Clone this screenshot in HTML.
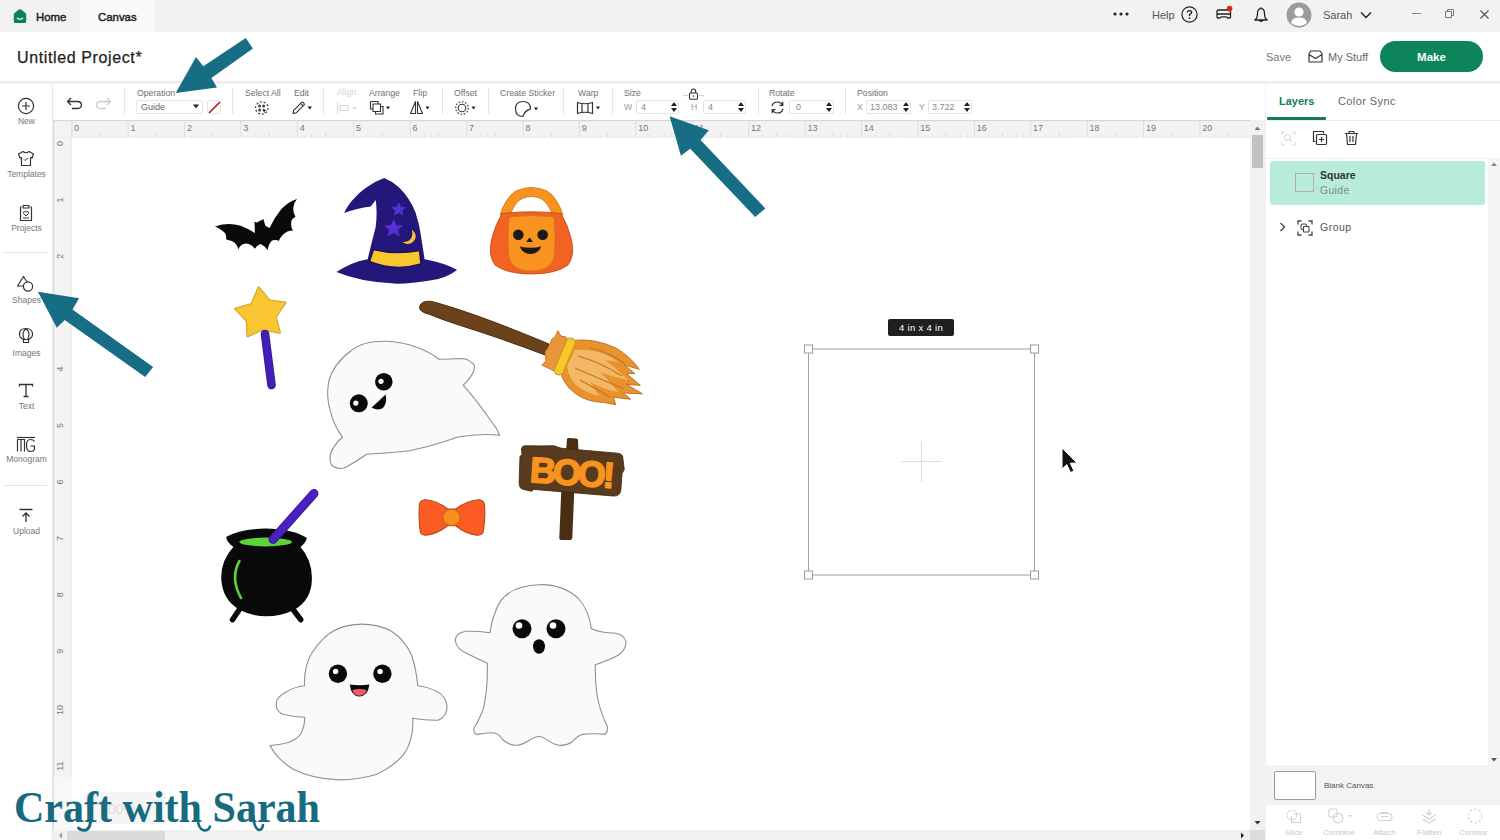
<!DOCTYPE html>
<html><head><meta charset="utf-8">
<style>
*{box-sizing:border-box;margin:0;padding:0}
html,body{width:1500px;height:840px;overflow:hidden;background:#fff;font-family:"Liberation Sans",sans-serif;color:#333}
.a{position:absolute;white-space:nowrap}
svg.a{overflow:visible}
#tabbar{left:0;top:0;width:1500px;height:32px;background:#f2f2f2}
#canvastab{left:80px;top:0;width:74px;height:32px;background:#fafafa}
#header{left:0;top:32px;width:1500px;height:50px;background:#fff}
#hdrline{left:0;top:81px;width:1500px;height:3px;background:linear-gradient(#e9e9e9,#f4f4f4)}
#sidebar{left:0;top:84px;width:53px;height:756px;background:#fff;border-right:1px solid #e8e8e8}
#toolbar{left:53px;top:84px;width:1212px;height:36px;background:#fff}
#panel{left:1265px;top:84px;width:235px;height:756px;background:#f3f3f3}
.t9{font-size:8.7px;line-height:9px;color:#707070}
.sep{position:absolute;top:88px;width:1px;height:26px;background:#e6e6e6}
.inp{position:absolute;top:100px;height:14px;border:1px solid #e4e4e4;border-radius:2px;background:#fff;font-size:9px;line-height:12px;color:#888;padding-left:4px}
.spin{position:absolute;top:1px;right:1px;width:7px;height:10px}
.sl{font-size:8.5px;line-height:9px;color:#777;text-align:center;width:53px;left:0}
.bl{font-size:8px;line-height:8px;color:#c8c8c8}
</style></head><body>
<div id="tabbar" class="a"></div>
<div id="canvastab" class="a"></div>
<svg class="a" style="left:13px;top:8px" width="14" height="16" viewBox="0 0 14 16"><path d="M0.8 6.5 Q0.8 5.6 1.6 5 L5.8 1.6 Q7 0.7 8.2 1.6 L12.4 5 Q13.2 5.6 13.2 6.5 V13.6 Q13.2 15 11.8 15 H2.2 Q0.8 15 0.8 13.6 Z" fill="#0f8056"/><path d="M4.3 10.2 Q7 12.4 9.7 10.2" stroke="#a8f0cc" stroke-width="1.5" fill="none" stroke-linecap="round"/></svg>
<div class="a" style="left:36px;top:12px;font-size:11.4px;line-height:11px;color:#222;-webkit-text-stroke:0.45px #222">Home</div>
<div class="a" style="left:98px;top:12px;font-size:11.4px;line-height:11px;color:#222;-webkit-text-stroke:0.45px #222">Canvas</div>
<!-- right top -->
<svg class="a" style="left:1113px;top:12px" width="16" height="4"><circle cx="2" cy="2" r="1.6" fill="#222"/><circle cx="8" cy="2" r="1.6" fill="#222"/><circle cx="14" cy="2" r="1.6" fill="#222"/></svg>
<div class="a" style="left:1152px;top:10px;font-size:11px;line-height:11px;color:#555">Help</div>
<svg class="a" style="left:1181px;top:6px" width="17" height="17" viewBox="0 0 17 17"><circle cx="8.5" cy="8.5" r="7.6" fill="none" stroke="#222" stroke-width="1.2"/><path d="M6.3 6.6 Q6.3 4.6 8.5 4.6 Q10.7 4.6 10.7 6.5 Q10.7 7.8 8.5 8.7 V10" fill="none" stroke="#222" stroke-width="1.3"/><circle cx="8.5" cy="12.2" r="0.9" fill="#222"/></svg>
<svg class="a" style="left:1216px;top:5px" width="18" height="16" viewBox="0 0 18 16"><path d="M2.5 5 H13 Q14.5 5 14.5 6.5 V12 Q14.5 13 13.5 13 H11.5 Q11 11.8 10 11.8 H5.5 Q4.5 11.8 4 13 H2 Q1 13 1 12 V6.5 Q1 5 2.5 5 Z M1 9 H14.5" fill="none" stroke="#222" stroke-width="1.3" stroke-linejoin="round"/><circle cx="13.6" cy="3.6" r="2.8" fill="#d42a10"/></svg>
<svg class="a" style="left:1253px;top:6px" width="16" height="17" viewBox="0 0 16 17"><path d="M8 1.2 V2.4 M3.6 12.2 Q4.5 10.5 4.5 7.5 Q4.5 2.6 8 2.6 Q11.5 2.6 11.5 7.5 Q11.5 10.5 12.4 12.2 L14.2 14 H1.8 Z M6.3 14.3 Q8 16.6 9.7 14.3" fill="none" stroke="#222" stroke-width="1.3" stroke-linejoin="round"/></svg>
<svg class="a" style="left:1286px;top:2px" width="26" height="26" viewBox="0 0 26 26"><circle cx="13" cy="13" r="12.5" fill="#9b9b9b"/><circle cx="13" cy="10" r="4.6" fill="#fff"/><path d="M5 21 Q6 15.6 13 15.6 Q20 15.6 21 21 Q17.5 24 13 24 Q8.5 24 5 21 Z" fill="#fff"/></svg>
<div class="a" style="left:1323px;top:10px;font-size:11px;line-height:11px;color:#555">Sarah</div>
<svg class="a" style="left:1360px;top:11px" width="12" height="8"><path d="M1 1.5 L6 6.5 L11 1.5" fill="none" stroke="#222" stroke-width="1.4"/></svg>
<div class="a" style="left:1412px;top:13px;width:9px;height:1px;background:#888"></div>
<svg class="a" style="left:1445px;top:9px" width="9" height="9"><path d="M0.5 2.5 H6.5 V8.5 H0.5 Z M2.5 2.5 V0.5 H8.5 V6.5 H6.5" fill="none" stroke="#777" stroke-width="1"/></svg>
<svg class="a" style="left:1480px;top:10px" width="9" height="9"><path d="M0.5 0.5 L8.5 8.5 M8.5 0.5 L0.5 8.5" stroke="#555" stroke-width="1.1"/></svg>
<!-- header -->
<div id="header" class="a"></div>
<div class="a" style="left:17px;top:50px;font-size:16px;line-height:16px;color:#222;letter-spacing:0.62px;-webkit-text-stroke:0.25px #222">Untitled Project*</div>
<div class="a" style="left:1266px;top:52px;font-size:11px;line-height:11px;color:#777">Save</div>
<svg class="a" style="left:1308px;top:50px" width="15" height="13" viewBox="0 0 15 13"><path d="M1 3.5 L2.8 1 H12.2 L14 3.5 V11.5 Q14 12 13.5 12 H1.5 Q1 12 1 11.5 Z M1 4.5 L7.5 8.5 L14 4.5" fill="none" stroke="#333" stroke-width="1.2" stroke-linejoin="round"/></svg>
<div class="a" style="left:1328px;top:52px;font-size:11px;line-height:11px;color:#666">My Stuff</div>
<div class="a" style="left:1380px;top:41px;width:103px;height:31px;border-radius:16px;background:#0d8459;color:#fff;font-size:11.5px;font-weight:bold;text-align:center;line-height:33px">Make</div>
<div id="hdrline" class="a"></div>
<div id="toolbar" class="a"></div>
<svg class="a" style="left:66px;top:97px" width="17" height="13" viewBox="0 0 17 13"><path d="M5 1 L1.5 4.5 L5 8 M1.5 4.5 H11 Q15.5 4.5 15.5 8 Q15.5 11.5 11 11.5 H6" fill="none" stroke="#333" stroke-width="1.3" stroke-linejoin="round"/></svg>
<svg class="a" style="left:95px;top:97px" width="17" height="13" viewBox="0 0 17 13"><path d="M12 1 L15.5 4.5 L12 8 M15.5 4.5 H6 Q1.5 4.5 1.5 8 Q1.5 11.5 6 11.5 H11" fill="none" stroke="#ccc" stroke-width="1.3" stroke-linejoin="round"/></svg>
<div class="sep" style="left:124px"></div>
<div class="a t9" style="left:137px;top:89px">Operation</div>
<div class="inp" style="left:136px;width:67px;color:#666">Guide</div>
<svg class="a" style="left:193px;top:104px" width="6" height="5"><path d="M0 0.5 H6 L3 4.5 Z" fill="#222"/></svg>
<div class="a" style="left:207px;top:100px;width:14px;height:14px;border:1px solid #e4e4e4;border-radius:2px;background:#fff"></div>
<svg class="a" style="left:207px;top:100px" width="14" height="14"><path d="M2 13 L13 2" stroke="#c8191f" stroke-width="1.7"/></svg>
<div class="sep" style="left:232px"></div>
<div class="a t9" style="left:245px;top:89px">Select All</div>
<svg class="a" style="left:254px;top:100px" width="16" height="16" viewBox="0 0 16 16"><circle cx="7.8" cy="8" r="6.2" fill="none" stroke="#333" stroke-width="1.2" stroke-dasharray="1.8 2"/><circle cx="5.6" cy="6" r="1.5" fill="#444"/><circle cx="9.6" cy="6" r="1.5" fill="#444"/><circle cx="5.6" cy="10" r="1.5" fill="#444"/><path d="M8.5 8.8 L12.6 10.2 L10.6 11.1 L10.4 13.5 Z" fill="#111"/></svg>
<div class="a t9" style="left:294px;top:89px">Edit</div>
<svg class="a" style="left:291px;top:100px" width="22" height="15" viewBox="0 0 22 15"><path d="M2 13.5 L2.6 10.4 L10.4 2.6 Q11.3 1.7 12.2 2.6 L12.9 3.3 Q13.8 4.2 12.9 5.1 L5.1 12.9 Z M9.6 3.4 L12.1 5.9" fill="none" stroke="#333" stroke-width="1.1" stroke-linejoin="round"/><path d="M16.5 6.5 H21 L18.75 9.5 Z" fill="#222"/></svg>
<div class="sep" style="left:323px"></div>
<div class="a t9" style="left:337px;top:88px;color:#d4d4d4">Align</div>
<svg class="a" style="left:336px;top:102px" width="22" height="12" viewBox="0 0 22 12"><path d="M1.5 1 V11 M4 3.5 H12 V8.5 H4 Z" fill="none" stroke="#d4d4d4" stroke-width="1.1"/><path d="M16.5 5 H20.5 L18.5 7.5 Z" fill="#d4d4d4"/></svg>
<div class="a t9" style="left:369px;top:89px">Arrange</div>
<svg class="a" style="left:369px;top:100px" width="22" height="16" viewBox="0 0 22 16"><path d="M1.5 1.5 H9 V4 M4 4 H11.5 V11.5 H4 Z M1.5 1.5 V9 H4 M6.5 11.5 V14 H14 V6.5 H11.5" fill="none" stroke="#333" stroke-width="1.1"/><path d="M17 6.5 H21 L19 9.5 Z" fill="#222"/></svg>
<div class="a t9" style="left:413px;top:89px">Flip</div>
<svg class="a" style="left:409px;top:100px" width="22" height="15" viewBox="0 0 22 15"><path d="M6.5 1.5 L1.5 13.5 H6.5 Z M8.5 1.5 L13.5 13.5 H8.5 Z" fill="none" stroke="#333" stroke-width="1.1" stroke-linejoin="round"/><path d="M16.5 6.5 H20.5 L18.5 9.5 Z" fill="#222"/></svg>
<div class="sep" style="left:442px"></div>
<div class="a t9" style="left:454px;top:89px">Offset</div>
<svg class="a" style="left:455px;top:100px" width="22" height="16" viewBox="0 0 22 16"><circle cx="7" cy="8" r="3.8" fill="none" stroke="#333" stroke-width="1.1"/><circle cx="7" cy="8" r="6.3" fill="none" stroke="#333" stroke-width="1.1" stroke-dasharray="1.6 1.6"/><path d="M16.5 6.5 H20.5 L18.5 9.5 Z" fill="#222"/></svg>
<div class="sep" style="left:488px"></div>
<div class="a t9" style="left:500px;top:89px">Create Sticker</div>
<svg class="a" style="left:514px;top:100px" width="26" height="18" viewBox="0 0 26 18"><path d="M9 16.5 Q1.5 16.5 1.5 9 Q1.5 1.5 9 1.5 Q16.5 1.5 16.5 9 Q11 9.5 9 16.5 Z M16.5 9 Q10.5 11 9 16.5" fill="none" stroke="#333" stroke-width="1.2" stroke-linejoin="round"/><path d="M20 7.5 H24 L22 10.5 Z" fill="#222"/></svg>
<div class="sep" style="left:563px"></div>
<div class="a t9" style="left:578px;top:89px">Warp</div>
<svg class="a" style="left:576px;top:101px" width="26" height="14" viewBox="0 0 26 14"><path d="M1.5 1.5 Q9 4 16.5 1.5 V12.5 Q9 10 1.5 12.5 Z M6 2.6 V11.4 M12 2.6 V11.4" fill="none" stroke="#333" stroke-width="1.2"/><path d="M20 5.5 H24 L22 8.5 Z" fill="#222"/></svg>
<div class="sep" style="left:612px"></div>
<div class="a t9" style="left:624px;top:89px">Size</div>
<div class="a t9" style="left:624px;top:103px;color:#999">W</div>
<div class="inp" style="left:636px;width:43px">4</div>
<svg class="a" style="left:670px;top:101px" width="8" height="12"><path d="M4 1 L7 5 H1 Z M4 11 L7 7 H1 Z" fill="#222"/></svg>
<svg class="a" style="left:683px;top:88px" width="21" height="12" viewBox="0 0 21 12"><path d="M0.5 8.5 V7.5 H5 M16 7.5 H20.5 V8.5" fill="none" stroke="#ccc" stroke-width="1"/><rect x="6.5" y="5" width="8" height="6.2" rx="1" fill="none" stroke="#333" stroke-width="1.1"/><path d="M8.3 5 V3.2 Q8.3 1 10.5 1 Q12.7 1 12.7 3.2 V5" fill="none" stroke="#333" stroke-width="1.1"/><circle cx="10.5" cy="8" r="0.8" fill="#333"/></svg>
<div class="a t9" style="left:691px;top:103px;color:#999">H</div>
<div class="inp" style="left:703px;width:43px">4</div>
<svg class="a" style="left:737px;top:101px" width="8" height="12"><path d="M4 1 L7 5 H1 Z M4 11 L7 7 H1 Z" fill="#222"/></svg>
<div class="sep" style="left:758px"></div>
<div class="a t9" style="left:769px;top:89px">Rotate</div>
<svg class="a" style="left:770px;top:100px" width="15" height="15" viewBox="0 0 15 15"><path d="M2 6 Q3 2 7.5 2 Q11 2 12.6 5 M13 9 Q12 13 7.5 13 Q4 13 2.4 10 M12.8 1.8 V5.3 H9.5 M2.2 13.2 V9.7 H5.5" fill="none" stroke="#333" stroke-width="1.2"/></svg>
<div class="inp" style="left:789px;width:45px;padding-left:6px">0</div>
<svg class="a" style="left:825px;top:101px" width="8" height="12"><path d="M4 1 L7 5 H1 Z M4 11 L7 7 H1 Z" fill="#222"/></svg>
<div class="sep" style="left:845px"></div>
<div class="a t9" style="left:857px;top:89px">Position</div>
<div class="a t9" style="left:857px;top:103px;color:#999">X</div>
<div class="inp" style="left:866px;width:45px;padding-left:3px">13.083</div>
<svg class="a" style="left:902px;top:101px" width="8" height="12"><path d="M4 1 L7 5 H1 Z M4 11 L7 7 H1 Z" fill="#222"/></svg>
<div class="a t9" style="left:919px;top:103px;color:#999">Y</div>
<div class="inp" style="left:928px;width:44px;padding-left:3px">3.722</div>
<svg class="a" style="left:963px;top:101px" width="8" height="12"><path d="M4 1 L7 5 H1 Z M4 11 L7 7 H1 Z" fill="#222"/></svg>
<div id="sidebar" class="a"></div>
<svg class="a" style="left:17px;top:97px" width="18" height="18" viewBox="0 0 18 18"><circle cx="9" cy="9" r="7.6" fill="none" stroke="#333" stroke-width="1.2"/><path d="M9 5 V13 M5 9 H13" stroke="#333" stroke-width="1.2"/></svg>
<div class="a sl" style="top:117px">New</div>
<svg class="a" style="left:17px;top:150px" width="18" height="17" viewBox="0 0 18 17"><path d="M6 1.5 L1.5 4 L3 8 L4.5 7.5 V15.5 H13.5 V7.5 L15 8 L16.5 4 L12 1.5 Q9 4 6 1.5 Z" fill="none" stroke="#333" stroke-width="1.2" stroke-linejoin="round"/><path d="M7 9.5 L8 10.5 L11 8" fill="none" stroke="#333" stroke-width="1"/></svg>
<div class="a sl" style="top:170px">Templates</div>
<svg class="a" style="left:18px;top:204px" width="16" height="18" viewBox="0 0 16 18"><path d="M3.5 3 H2.5 V16.5 H13.5 V3 H12.5 M5 1.5 H11 V4 H5 Z" fill="none" stroke="#333" stroke-width="1.2" stroke-linejoin="round"/><path d="M8 12 L5.5 9.5 Q4.8 8 6.2 7.5 Q7.3 7.3 8 8.3 Q8.7 7.3 9.8 7.5 Q11.2 8 10.5 9.5 Z" fill="none" stroke="#333" stroke-width="1"/><path d="M5 14 H11" stroke="#333" stroke-width="1"/></svg>
<div class="a sl" style="top:224px">Projects</div>
<div class="a" style="left:4px;top:252px;width:43px;height:1px;background:#e4e4e4"></div>
<svg class="a" style="left:16px;top:275px" width="19" height="18" viewBox="0 0 19 18"><path d="M7.5 1.5 L1.5 11 H13.5 Z" fill="none" stroke="#333" stroke-width="1.2" stroke-linejoin="round"/><circle cx="12" cy="11.5" r="4.6" fill="#fff" stroke="#333" stroke-width="1.2"/><path d="M9 9 L13.5 11" stroke="#fff" stroke-width="0"/></svg>
<div class="a sl" style="top:296px">Shapes</div>
<svg class="a" style="left:18px;top:327px" width="16" height="18" viewBox="0 0 16 18"><path d="M8 1.5 Q14.5 1.5 14.5 7.5 Q14.5 10.5 10.5 12.5 H5.5 Q1.5 10.5 1.5 7.5 Q1.5 1.5 8 1.5 Z M5.5 12.5 V15.5 H10.5 V12.5 M8 1.5 Q5 4 5 7.5 Q5 10.5 6.5 12.5 M8 1.5 Q11 4 11 7.5 Q11 10.5 9.5 12.5" fill="none" stroke="#333" stroke-width="1.2" stroke-linejoin="round"/></svg>
<div class="a sl" style="top:349px">Images</div>
<svg class="a" style="left:18px;top:383px" width="16" height="15" viewBox="0 0 16 15"><path d="M1.5 3.5 V1.5 H14.5 V3.5 M8 1.5 V13.5 M5.5 13.5 H10.5" fill="none" stroke="#333" stroke-width="1.3"/></svg>
<div class="a sl" style="top:402px">Text</div>
<svg class="a" style="left:16px;top:436px" width="20" height="17" viewBox="0 0 20 17"><path d="M1 1.5 H19" stroke="#333" stroke-width="1.2"/><path d="M1.5 15.5 V4 Q1.5 3.5 2 3.5 H8.5 V15.5 M5 3.5 V15.5" fill="none" stroke="#333" stroke-width="1.2"/><path d="M18.5 5.5 Q17.5 3.5 14.5 3.5 Q10.5 3.5 10.5 9.5 Q10.5 15.5 14.5 15.5 Q18.5 15.5 18.5 12 V10 H14.5" fill="none" stroke="#333" stroke-width="1.2"/></svg>
<div class="a sl" style="top:455px">Monogram</div>
<div class="a" style="left:4px;top:485px;width:43px;height:1px;background:#e4e4e4"></div>
<svg class="a" style="left:18px;top:508px" width="16" height="15" viewBox="0 0 16 15"><path d="M1.5 1.5 H14.5 M8 14 V5 M4.5 8.5 L8 5 L11.5 8.5" fill="none" stroke="#333" stroke-width="1.3"/></svg>
<div class="a sl" style="top:527px">Upload</div>
<svg class="a" style="left:0;top:0" width="1500" height="840">
<rect x="53" y="120" width="1197" height="18" fill="#f3f3f3"/>
<rect x="53" y="120" width="1197" height="1.2" fill="#d6d6d6"/>
<rect x="71.3" y="121" width="1" height="17" fill="#dedede"/>
<rect x="78.4" y="135.5" width="1" height="2.5" fill="#dcdcdc"/>
<rect x="85.4" y="134.5" width="1" height="3.5" fill="#dcdcdc"/>
<rect x="92.5" y="135.5" width="1" height="2.5" fill="#dcdcdc"/>
<rect x="99.5" y="133" width="1" height="5" fill="#dcdcdc"/>
<rect x="106.6" y="135.5" width="1" height="2.5" fill="#dcdcdc"/>
<rect x="113.6" y="134.5" width="1" height="3.5" fill="#dcdcdc"/>
<rect x="120.7" y="135.5" width="1" height="2.5" fill="#dcdcdc"/>
<rect x="127.7" y="121" width="1" height="17" fill="#dedede"/>
<rect x="134.8" y="135.5" width="1" height="2.5" fill="#dcdcdc"/>
<rect x="141.8" y="134.5" width="1" height="3.5" fill="#dcdcdc"/>
<rect x="148.9" y="135.5" width="1" height="2.5" fill="#dcdcdc"/>
<rect x="155.9" y="133" width="1" height="5" fill="#dcdcdc"/>
<rect x="163.0" y="135.5" width="1" height="2.5" fill="#dcdcdc"/>
<rect x="170.0" y="134.5" width="1" height="3.5" fill="#dcdcdc"/>
<rect x="177.1" y="135.5" width="1" height="2.5" fill="#dcdcdc"/>
<rect x="184.1" y="121" width="1" height="17" fill="#dedede"/>
<rect x="191.2" y="135.5" width="1" height="2.5" fill="#dcdcdc"/>
<rect x="198.2" y="134.5" width="1" height="3.5" fill="#dcdcdc"/>
<rect x="205.3" y="135.5" width="1" height="2.5" fill="#dcdcdc"/>
<rect x="212.3" y="133" width="1" height="5" fill="#dcdcdc"/>
<rect x="219.4" y="135.5" width="1" height="2.5" fill="#dcdcdc"/>
<rect x="226.4" y="134.5" width="1" height="3.5" fill="#dcdcdc"/>
<rect x="233.5" y="135.5" width="1" height="2.5" fill="#dcdcdc"/>
<rect x="240.5" y="121" width="1" height="17" fill="#dedede"/>
<rect x="247.6" y="135.5" width="1" height="2.5" fill="#dcdcdc"/>
<rect x="254.6" y="134.5" width="1" height="3.5" fill="#dcdcdc"/>
<rect x="261.7" y="135.5" width="1" height="2.5" fill="#dcdcdc"/>
<rect x="268.7" y="133" width="1" height="5" fill="#dcdcdc"/>
<rect x="275.8" y="135.5" width="1" height="2.5" fill="#dcdcdc"/>
<rect x="282.8" y="134.5" width="1" height="3.5" fill="#dcdcdc"/>
<rect x="289.9" y="135.5" width="1" height="2.5" fill="#dcdcdc"/>
<rect x="296.9" y="121" width="1" height="17" fill="#dedede"/>
<rect x="304.0" y="135.5" width="1" height="2.5" fill="#dcdcdc"/>
<rect x="311.0" y="134.5" width="1" height="3.5" fill="#dcdcdc"/>
<rect x="318.1" y="135.5" width="1" height="2.5" fill="#dcdcdc"/>
<rect x="325.1" y="133" width="1" height="5" fill="#dcdcdc"/>
<rect x="332.2" y="135.5" width="1" height="2.5" fill="#dcdcdc"/>
<rect x="339.2" y="134.5" width="1" height="3.5" fill="#dcdcdc"/>
<rect x="346.3" y="135.5" width="1" height="2.5" fill="#dcdcdc"/>
<rect x="353.3" y="121" width="1" height="17" fill="#dedede"/>
<rect x="360.4" y="135.5" width="1" height="2.5" fill="#dcdcdc"/>
<rect x="367.5" y="134.5" width="1" height="3.5" fill="#dcdcdc"/>
<rect x="374.5" y="135.5" width="1" height="2.5" fill="#dcdcdc"/>
<rect x="381.6" y="133" width="1" height="5" fill="#dcdcdc"/>
<rect x="388.6" y="135.5" width="1" height="2.5" fill="#dcdcdc"/>
<rect x="395.7" y="134.5" width="1" height="3.5" fill="#dcdcdc"/>
<rect x="402.7" y="135.5" width="1" height="2.5" fill="#dcdcdc"/>
<rect x="409.8" y="121" width="1" height="17" fill="#dedede"/>
<rect x="416.8" y="135.5" width="1" height="2.5" fill="#dcdcdc"/>
<rect x="423.9" y="134.5" width="1" height="3.5" fill="#dcdcdc"/>
<rect x="430.9" y="135.5" width="1" height="2.5" fill="#dcdcdc"/>
<rect x="438.0" y="133" width="1" height="5" fill="#dcdcdc"/>
<rect x="445.0" y="135.5" width="1" height="2.5" fill="#dcdcdc"/>
<rect x="452.1" y="134.5" width="1" height="3.5" fill="#dcdcdc"/>
<rect x="459.1" y="135.5" width="1" height="2.5" fill="#dcdcdc"/>
<rect x="466.2" y="121" width="1" height="17" fill="#dedede"/>
<rect x="473.2" y="135.5" width="1" height="2.5" fill="#dcdcdc"/>
<rect x="480.3" y="134.5" width="1" height="3.5" fill="#dcdcdc"/>
<rect x="487.3" y="135.5" width="1" height="2.5" fill="#dcdcdc"/>
<rect x="494.4" y="133" width="1" height="5" fill="#dcdcdc"/>
<rect x="501.4" y="135.5" width="1" height="2.5" fill="#dcdcdc"/>
<rect x="508.5" y="134.5" width="1" height="3.5" fill="#dcdcdc"/>
<rect x="515.5" y="135.5" width="1" height="2.5" fill="#dcdcdc"/>
<rect x="522.6" y="121" width="1" height="17" fill="#dedede"/>
<rect x="529.6" y="135.5" width="1" height="2.5" fill="#dcdcdc"/>
<rect x="536.7" y="134.5" width="1" height="3.5" fill="#dcdcdc"/>
<rect x="543.7" y="135.5" width="1" height="2.5" fill="#dcdcdc"/>
<rect x="550.8" y="133" width="1" height="5" fill="#dcdcdc"/>
<rect x="557.8" y="135.5" width="1" height="2.5" fill="#dcdcdc"/>
<rect x="564.9" y="134.5" width="1" height="3.5" fill="#dcdcdc"/>
<rect x="571.9" y="135.5" width="1" height="2.5" fill="#dcdcdc"/>
<rect x="579.0" y="121" width="1" height="17" fill="#dedede"/>
<rect x="586.0" y="135.5" width="1" height="2.5" fill="#dcdcdc"/>
<rect x="593.1" y="134.5" width="1" height="3.5" fill="#dcdcdc"/>
<rect x="600.1" y="135.5" width="1" height="2.5" fill="#dcdcdc"/>
<rect x="607.2" y="133" width="1" height="5" fill="#dcdcdc"/>
<rect x="614.2" y="135.5" width="1" height="2.5" fill="#dcdcdc"/>
<rect x="621.3" y="134.5" width="1" height="3.5" fill="#dcdcdc"/>
<rect x="628.3" y="135.5" width="1" height="2.5" fill="#dcdcdc"/>
<rect x="635.4" y="121" width="1" height="17" fill="#dedede"/>
<rect x="642.5" y="135.5" width="1" height="2.5" fill="#dcdcdc"/>
<rect x="649.5" y="134.5" width="1" height="3.5" fill="#dcdcdc"/>
<rect x="656.6" y="135.5" width="1" height="2.5" fill="#dcdcdc"/>
<rect x="663.6" y="133" width="1" height="5" fill="#dcdcdc"/>
<rect x="670.7" y="135.5" width="1" height="2.5" fill="#dcdcdc"/>
<rect x="677.7" y="134.5" width="1" height="3.5" fill="#dcdcdc"/>
<rect x="684.8" y="135.5" width="1" height="2.5" fill="#dcdcdc"/>
<rect x="691.8" y="121" width="1" height="17" fill="#dedede"/>
<rect x="698.9" y="135.5" width="1" height="2.5" fill="#dcdcdc"/>
<rect x="705.9" y="134.5" width="1" height="3.5" fill="#dcdcdc"/>
<rect x="713.0" y="135.5" width="1" height="2.5" fill="#dcdcdc"/>
<rect x="720.0" y="133" width="1" height="5" fill="#dcdcdc"/>
<rect x="727.1" y="135.5" width="1" height="2.5" fill="#dcdcdc"/>
<rect x="734.1" y="134.5" width="1" height="3.5" fill="#dcdcdc"/>
<rect x="741.2" y="135.5" width="1" height="2.5" fill="#dcdcdc"/>
<rect x="748.2" y="121" width="1" height="17" fill="#dedede"/>
<rect x="755.3" y="135.5" width="1" height="2.5" fill="#dcdcdc"/>
<rect x="762.3" y="134.5" width="1" height="3.5" fill="#dcdcdc"/>
<rect x="769.4" y="135.5" width="1" height="2.5" fill="#dcdcdc"/>
<rect x="776.4" y="133" width="1" height="5" fill="#dcdcdc"/>
<rect x="783.5" y="135.5" width="1" height="2.5" fill="#dcdcdc"/>
<rect x="790.5" y="134.5" width="1" height="3.5" fill="#dcdcdc"/>
<rect x="797.6" y="135.5" width="1" height="2.5" fill="#dcdcdc"/>
<rect x="804.6" y="121" width="1" height="17" fill="#dedede"/>
<rect x="811.7" y="135.5" width="1" height="2.5" fill="#dcdcdc"/>
<rect x="818.7" y="134.5" width="1" height="3.5" fill="#dcdcdc"/>
<rect x="825.8" y="135.5" width="1" height="2.5" fill="#dcdcdc"/>
<rect x="832.8" y="133" width="1" height="5" fill="#dcdcdc"/>
<rect x="839.9" y="135.5" width="1" height="2.5" fill="#dcdcdc"/>
<rect x="846.9" y="134.5" width="1" height="3.5" fill="#dcdcdc"/>
<rect x="854.0" y="135.5" width="1" height="2.5" fill="#dcdcdc"/>
<rect x="861.0" y="121" width="1" height="17" fill="#dedede"/>
<rect x="868.1" y="135.5" width="1" height="2.5" fill="#dcdcdc"/>
<rect x="875.1" y="134.5" width="1" height="3.5" fill="#dcdcdc"/>
<rect x="882.2" y="135.5" width="1" height="2.5" fill="#dcdcdc"/>
<rect x="889.2" y="133" width="1" height="5" fill="#dcdcdc"/>
<rect x="896.3" y="135.5" width="1" height="2.5" fill="#dcdcdc"/>
<rect x="903.3" y="134.5" width="1" height="3.5" fill="#dcdcdc"/>
<rect x="910.4" y="135.5" width="1" height="2.5" fill="#dcdcdc"/>
<rect x="917.4" y="121" width="1" height="17" fill="#dedede"/>
<rect x="924.5" y="135.5" width="1" height="2.5" fill="#dcdcdc"/>
<rect x="931.6" y="134.5" width="1" height="3.5" fill="#dcdcdc"/>
<rect x="938.6" y="135.5" width="1" height="2.5" fill="#dcdcdc"/>
<rect x="945.7" y="133" width="1" height="5" fill="#dcdcdc"/>
<rect x="952.7" y="135.5" width="1" height="2.5" fill="#dcdcdc"/>
<rect x="959.8" y="134.5" width="1" height="3.5" fill="#dcdcdc"/>
<rect x="966.8" y="135.5" width="1" height="2.5" fill="#dcdcdc"/>
<rect x="973.9" y="121" width="1" height="17" fill="#dedede"/>
<rect x="980.9" y="135.5" width="1" height="2.5" fill="#dcdcdc"/>
<rect x="988.0" y="134.5" width="1" height="3.5" fill="#dcdcdc"/>
<rect x="995.0" y="135.5" width="1" height="2.5" fill="#dcdcdc"/>
<rect x="1002.1" y="133" width="1" height="5" fill="#dcdcdc"/>
<rect x="1009.1" y="135.5" width="1" height="2.5" fill="#dcdcdc"/>
<rect x="1016.2" y="134.5" width="1" height="3.5" fill="#dcdcdc"/>
<rect x="1023.2" y="135.5" width="1" height="2.5" fill="#dcdcdc"/>
<rect x="1030.3" y="121" width="1" height="17" fill="#dedede"/>
<rect x="1037.3" y="135.5" width="1" height="2.5" fill="#dcdcdc"/>
<rect x="1044.4" y="134.5" width="1" height="3.5" fill="#dcdcdc"/>
<rect x="1051.4" y="135.5" width="1" height="2.5" fill="#dcdcdc"/>
<rect x="1058.5" y="133" width="1" height="5" fill="#dcdcdc"/>
<rect x="1065.5" y="135.5" width="1" height="2.5" fill="#dcdcdc"/>
<rect x="1072.6" y="134.5" width="1" height="3.5" fill="#dcdcdc"/>
<rect x="1079.6" y="135.5" width="1" height="2.5" fill="#dcdcdc"/>
<rect x="1086.7" y="121" width="1" height="17" fill="#dedede"/>
<rect x="1093.7" y="135.5" width="1" height="2.5" fill="#dcdcdc"/>
<rect x="1100.8" y="134.5" width="1" height="3.5" fill="#dcdcdc"/>
<rect x="1107.8" y="135.5" width="1" height="2.5" fill="#dcdcdc"/>
<rect x="1114.9" y="133" width="1" height="5" fill="#dcdcdc"/>
<rect x="1121.9" y="135.5" width="1" height="2.5" fill="#dcdcdc"/>
<rect x="1129.0" y="134.5" width="1" height="3.5" fill="#dcdcdc"/>
<rect x="1136.0" y="135.5" width="1" height="2.5" fill="#dcdcdc"/>
<rect x="1143.1" y="121" width="1" height="17" fill="#dedede"/>
<rect x="1150.1" y="135.5" width="1" height="2.5" fill="#dcdcdc"/>
<rect x="1157.2" y="134.5" width="1" height="3.5" fill="#dcdcdc"/>
<rect x="1164.2" y="135.5" width="1" height="2.5" fill="#dcdcdc"/>
<rect x="1171.3" y="133" width="1" height="5" fill="#dcdcdc"/>
<rect x="1178.3" y="135.5" width="1" height="2.5" fill="#dcdcdc"/>
<rect x="1185.4" y="134.5" width="1" height="3.5" fill="#dcdcdc"/>
<rect x="1192.4" y="135.5" width="1" height="2.5" fill="#dcdcdc"/>
<rect x="1199.5" y="121" width="1" height="17" fill="#dedede"/>
<rect x="1206.6" y="135.5" width="1" height="2.5" fill="#dcdcdc"/>
<rect x="1213.6" y="134.5" width="1" height="3.5" fill="#dcdcdc"/>
<rect x="1220.7" y="135.5" width="1" height="2.5" fill="#dcdcdc"/>
<rect x="1227.7" y="133" width="1" height="5" fill="#dcdcdc"/>
<rect x="1234.8" y="135.5" width="1" height="2.5" fill="#dcdcdc"/>
<rect x="1241.8" y="134.5" width="1" height="3.5" fill="#dcdcdc"/>
<rect x="54" y="138.0" width="18" height="1" fill="#dedede"/>
<rect x="69.5" y="145.1" width="2.5" height="1" fill="#dcdcdc"/>
<rect x="68.5" y="152.1" width="3.5" height="1" fill="#dcdcdc"/>
<rect x="69.5" y="159.2" width="2.5" height="1" fill="#dcdcdc"/>
<rect x="67" y="166.2" width="5" height="1" fill="#dcdcdc"/>
<rect x="69.5" y="173.3" width="2.5" height="1" fill="#dcdcdc"/>
<rect x="68.5" y="180.3" width="3.5" height="1" fill="#dcdcdc"/>
<rect x="69.5" y="187.4" width="2.5" height="1" fill="#dcdcdc"/>
<rect x="54" y="194.4" width="18" height="1" fill="#dedede"/>
<rect x="69.5" y="201.5" width="2.5" height="1" fill="#dcdcdc"/>
<rect x="68.5" y="208.5" width="3.5" height="1" fill="#dcdcdc"/>
<rect x="69.5" y="215.6" width="2.5" height="1" fill="#dcdcdc"/>
<rect x="67" y="222.6" width="5" height="1" fill="#dcdcdc"/>
<rect x="69.5" y="229.7" width="2.5" height="1" fill="#dcdcdc"/>
<rect x="68.5" y="236.7" width="3.5" height="1" fill="#dcdcdc"/>
<rect x="69.5" y="243.8" width="2.5" height="1" fill="#dcdcdc"/>
<rect x="54" y="250.8" width="18" height="1" fill="#dedede"/>
<rect x="69.5" y="257.9" width="2.5" height="1" fill="#dcdcdc"/>
<rect x="68.5" y="264.9" width="3.5" height="1" fill="#dcdcdc"/>
<rect x="69.5" y="272.0" width="2.5" height="1" fill="#dcdcdc"/>
<rect x="67" y="279.0" width="5" height="1" fill="#dcdcdc"/>
<rect x="69.5" y="286.1" width="2.5" height="1" fill="#dcdcdc"/>
<rect x="68.5" y="293.1" width="3.5" height="1" fill="#dcdcdc"/>
<rect x="69.5" y="300.2" width="2.5" height="1" fill="#dcdcdc"/>
<rect x="54" y="307.2" width="18" height="1" fill="#dedede"/>
<rect x="69.5" y="314.3" width="2.5" height="1" fill="#dcdcdc"/>
<rect x="68.5" y="321.3" width="3.5" height="1" fill="#dcdcdc"/>
<rect x="69.5" y="328.4" width="2.5" height="1" fill="#dcdcdc"/>
<rect x="67" y="335.4" width="5" height="1" fill="#dcdcdc"/>
<rect x="69.5" y="342.5" width="2.5" height="1" fill="#dcdcdc"/>
<rect x="68.5" y="349.5" width="3.5" height="1" fill="#dcdcdc"/>
<rect x="69.5" y="356.6" width="2.5" height="1" fill="#dcdcdc"/>
<rect x="54" y="363.6" width="18" height="1" fill="#dedede"/>
<rect x="69.5" y="370.7" width="2.5" height="1" fill="#dcdcdc"/>
<rect x="68.5" y="377.7" width="3.5" height="1" fill="#dcdcdc"/>
<rect x="69.5" y="384.8" width="2.5" height="1" fill="#dcdcdc"/>
<rect x="67" y="391.8" width="5" height="1" fill="#dcdcdc"/>
<rect x="69.5" y="398.9" width="2.5" height="1" fill="#dcdcdc"/>
<rect x="68.5" y="405.9" width="3.5" height="1" fill="#dcdcdc"/>
<rect x="69.5" y="413.0" width="2.5" height="1" fill="#dcdcdc"/>
<rect x="54" y="420.0" width="18" height="1" fill="#dedede"/>
<rect x="69.5" y="427.1" width="2.5" height="1" fill="#dcdcdc"/>
<rect x="68.5" y="434.2" width="3.5" height="1" fill="#dcdcdc"/>
<rect x="69.5" y="441.2" width="2.5" height="1" fill="#dcdcdc"/>
<rect x="67" y="448.3" width="5" height="1" fill="#dcdcdc"/>
<rect x="69.5" y="455.3" width="2.5" height="1" fill="#dcdcdc"/>
<rect x="68.5" y="462.4" width="3.5" height="1" fill="#dcdcdc"/>
<rect x="69.5" y="469.4" width="2.5" height="1" fill="#dcdcdc"/>
<rect x="54" y="476.5" width="18" height="1" fill="#dedede"/>
<rect x="69.5" y="483.5" width="2.5" height="1" fill="#dcdcdc"/>
<rect x="68.5" y="490.6" width="3.5" height="1" fill="#dcdcdc"/>
<rect x="69.5" y="497.6" width="2.5" height="1" fill="#dcdcdc"/>
<rect x="67" y="504.7" width="5" height="1" fill="#dcdcdc"/>
<rect x="69.5" y="511.7" width="2.5" height="1" fill="#dcdcdc"/>
<rect x="68.5" y="518.8" width="3.5" height="1" fill="#dcdcdc"/>
<rect x="69.5" y="525.8" width="2.5" height="1" fill="#dcdcdc"/>
<rect x="54" y="532.9" width="18" height="1" fill="#dedede"/>
<rect x="69.5" y="539.9" width="2.5" height="1" fill="#dcdcdc"/>
<rect x="68.5" y="547.0" width="3.5" height="1" fill="#dcdcdc"/>
<rect x="69.5" y="554.0" width="2.5" height="1" fill="#dcdcdc"/>
<rect x="67" y="561.1" width="5" height="1" fill="#dcdcdc"/>
<rect x="69.5" y="568.1" width="2.5" height="1" fill="#dcdcdc"/>
<rect x="68.5" y="575.2" width="3.5" height="1" fill="#dcdcdc"/>
<rect x="69.5" y="582.2" width="2.5" height="1" fill="#dcdcdc"/>
<rect x="54" y="589.3" width="18" height="1" fill="#dedede"/>
<rect x="69.5" y="596.3" width="2.5" height="1" fill="#dcdcdc"/>
<rect x="68.5" y="603.4" width="3.5" height="1" fill="#dcdcdc"/>
<rect x="69.5" y="610.4" width="2.5" height="1" fill="#dcdcdc"/>
<rect x="67" y="617.5" width="5" height="1" fill="#dcdcdc"/>
<rect x="69.5" y="624.5" width="2.5" height="1" fill="#dcdcdc"/>
<rect x="68.5" y="631.6" width="3.5" height="1" fill="#dcdcdc"/>
<rect x="69.5" y="638.6" width="2.5" height="1" fill="#dcdcdc"/>
<rect x="54" y="645.7" width="18" height="1" fill="#dedede"/>
<rect x="69.5" y="652.7" width="2.5" height="1" fill="#dcdcdc"/>
<rect x="68.5" y="659.8" width="3.5" height="1" fill="#dcdcdc"/>
<rect x="69.5" y="666.8" width="2.5" height="1" fill="#dcdcdc"/>
<rect x="67" y="673.9" width="5" height="1" fill="#dcdcdc"/>
<rect x="69.5" y="680.9" width="2.5" height="1" fill="#dcdcdc"/>
<rect x="68.5" y="688.0" width="3.5" height="1" fill="#dcdcdc"/>
<rect x="69.5" y="695.0" width="2.5" height="1" fill="#dcdcdc"/>
<rect x="54" y="702.1" width="18" height="1" fill="#dedede"/>
<rect x="69.5" y="709.2" width="2.5" height="1" fill="#dcdcdc"/>
<rect x="68.5" y="716.2" width="3.5" height="1" fill="#dcdcdc"/>
<rect x="69.5" y="723.3" width="2.5" height="1" fill="#dcdcdc"/>
<rect x="67" y="730.3" width="5" height="1" fill="#dcdcdc"/>
<rect x="69.5" y="737.4" width="2.5" height="1" fill="#dcdcdc"/>
<rect x="68.5" y="744.4" width="3.5" height="1" fill="#dcdcdc"/>
<rect x="69.5" y="751.5" width="2.5" height="1" fill="#dcdcdc"/>
<rect x="54" y="758.5" width="18" height="1" fill="#dedede"/>
<rect x="69.5" y="765.6" width="2.5" height="1" fill="#dcdcdc"/>
<rect x="68.5" y="772.6" width="3.5" height="1" fill="#dcdcdc"/>
<rect x="53" y="137" width="1197" height="1" fill="#ececec"/>
<rect x="53" y="138" width="19" height="692" fill="#f3f3f3"/>
<rect x="53" y="120" width="1.2" height="710" fill="#dcdcdc"/>
<rect x="71" y="138" width="1" height="692" fill="#ececec"/>
<text x="74.1" y="131.3" font-size="9" fill="#777" font-family="Liberation Sans">0</text>
<text x="130.5" y="131.3" font-size="9" fill="#777" font-family="Liberation Sans">1</text>
<text x="186.9" y="131.3" font-size="9" fill="#777" font-family="Liberation Sans">2</text>
<text x="243.3" y="131.3" font-size="9" fill="#777" font-family="Liberation Sans">3</text>
<text x="299.7" y="131.3" font-size="9" fill="#777" font-family="Liberation Sans">4</text>
<text x="356.1" y="131.3" font-size="9" fill="#777" font-family="Liberation Sans">5</text>
<text x="412.6" y="131.3" font-size="9" fill="#777" font-family="Liberation Sans">6</text>
<text x="469.0" y="131.3" font-size="9" fill="#777" font-family="Liberation Sans">7</text>
<text x="525.4" y="131.3" font-size="9" fill="#777" font-family="Liberation Sans">8</text>
<text x="581.8" y="131.3" font-size="9" fill="#777" font-family="Liberation Sans">9</text>
<text x="638.2" y="131.3" font-size="9" fill="#777" font-family="Liberation Sans">10</text>
<text x="694.6" y="131.3" font-size="9" fill="#777" font-family="Liberation Sans">11</text>
<text x="751.0" y="131.3" font-size="9" fill="#777" font-family="Liberation Sans">12</text>
<text x="807.4" y="131.3" font-size="9" fill="#777" font-family="Liberation Sans">13</text>
<text x="863.8" y="131.3" font-size="9" fill="#777" font-family="Liberation Sans">14</text>
<text x="920.2" y="131.3" font-size="9" fill="#777" font-family="Liberation Sans">15</text>
<text x="976.7" y="131.3" font-size="9" fill="#777" font-family="Liberation Sans">16</text>
<text x="1033.1" y="131.3" font-size="9" fill="#777" font-family="Liberation Sans">17</text>
<text x="1089.5" y="131.3" font-size="9" fill="#777" font-family="Liberation Sans">18</text>
<text x="1145.9" y="131.3" font-size="9" fill="#777" font-family="Liberation Sans">19</text>
<text x="1202.3" y="131.3" font-size="9" fill="#777" font-family="Liberation Sans">20</text>
<text transform="translate(62.5,141.0) rotate(-90)" text-anchor="end" font-size="9" fill="#777" font-family="Liberation Sans">0</text>
<text transform="translate(62.5,197.4) rotate(-90)" text-anchor="end" font-size="9" fill="#777" font-family="Liberation Sans">1</text>
<text transform="translate(62.5,253.8) rotate(-90)" text-anchor="end" font-size="9" fill="#777" font-family="Liberation Sans">2</text>
<text transform="translate(62.5,310.2) rotate(-90)" text-anchor="end" font-size="9" fill="#777" font-family="Liberation Sans">3</text>
<text transform="translate(62.5,366.6) rotate(-90)" text-anchor="end" font-size="9" fill="#777" font-family="Liberation Sans">4</text>
<text transform="translate(62.5,423.0) rotate(-90)" text-anchor="end" font-size="9" fill="#777" font-family="Liberation Sans">5</text>
<text transform="translate(62.5,479.5) rotate(-90)" text-anchor="end" font-size="9" fill="#777" font-family="Liberation Sans">6</text>
<text transform="translate(62.5,535.9) rotate(-90)" text-anchor="end" font-size="9" fill="#777" font-family="Liberation Sans">7</text>
<text transform="translate(62.5,592.3) rotate(-90)" text-anchor="end" font-size="9" fill="#777" font-family="Liberation Sans">8</text>
<text transform="translate(62.5,648.7) rotate(-90)" text-anchor="end" font-size="9" fill="#777" font-family="Liberation Sans">9</text>
<text transform="translate(62.5,705.1) rotate(-90)" text-anchor="end" font-size="9" fill="#777" font-family="Liberation Sans">10</text>
<text transform="translate(62.5,761.5) rotate(-90)" text-anchor="end" font-size="9" fill="#777" font-family="Liberation Sans">11</text>
<rect x="54" y="777" width="18" height="53" fill="#f8f8f8"/>
<rect x="1250" y="120" width="15" height="710" fill="#f1f1f1"/>
<rect x="1252" y="135" width="11" height="33" fill="#c2c2c2"/>
<path d="M1254.5 130 L1257.5 126.5 L1260.5 130 Z" fill="#777"/>
<path d="M1254.5 821 L1257.5 824.5 L1260.5 821 Z" fill="#333"/>
<rect x="53" y="830" width="1197" height="10" fill="#f1f1f1"/>
<rect x="67" y="831" width="98" height="9" fill="#dadada"/>
<path d="M62 832.5 L59 835.5 L62 838.5 Z" fill="#999"/>
<path d="M1241 832.5 L1244 835.5 L1241 838.5 Z" fill="#222"/>
<rect x="1250" y="830" width="15" height="10" fill="#dcdcdc"/>
</svg><svg class="a" style="left:0;top:0" width="1500" height="840" viewBox="0 0 1500 840">
<defs><clipPath id="cv"><rect x="72" y="138" width="1178" height="692"/></clipPath></defs>
<g clip-path="url(#cv)">
<!-- bat -->
<path d="M215 226.4 Q228 222 240 225.5 Q249 229 254.9 232.9 L254.5 221.7 L256.8 222.5 Q259 221.5 259.5 220.9 Q262 220 263.4 219 L265.3 225.6 Q267.5 227.5 269.6 227.9 Q274 218 281.2 209.3 Q289 201 297 198.9 Q293.5 203 293.5 207 Q292.5 212 295.5 216.7 Q291 219 291.2 222.5 Q290.5 227 293.1 230.6 Q287.3 230.5 282.7 234.9 Q279.5 238 278.8 241 Q277.5 239.5 272.6 240.3 Q269 242.5 267.6 250.3 Q265.5 246.5 260.3 244.1 Q256.5 245.5 254.9 248.8 Q251 243.5 246.4 243.4 Q240 244 238.2 249.6 Q237.5 243.5 231.7 241 Q227.5 239.5 226.2 239.5 Q226.5 235 225.1 233.3 Q222 229.5 215 226.4 Z" fill="#0a0a0a"/>
<!-- witch hat -->
<path d="M344.3 212.9 C350 200 365 185 384.3 177.9 Q392 181 398.6 187 Q410 198 415.7 212.9 Q420 226 421.4 238.6 L425 262 L367 262 Q371 245 375.7 227 Q377.5 212 375.7 200 L370.7 206.4 Q357 208 344.3 212.9 Z" fill="#231879"/>
<path d="M336.4 272.1 Q352 262 366 259.5 L426 259.5 Q445 263 457.1 270 Q445 279 430 280.5 Q410 284 394.3 283.6 Q360 282 336.4 272.1 Z" fill="#231879"/>
<path d="M373.5 249.5 Q395 255 419.5 250.5 L421 264 Q395 272 369.5 261.5 Z" fill="#f7c72c" stroke="#1a1060" stroke-width="1.4" stroke-linejoin="round"/>
<path d="M398.8 203 L400.8 207.3 L405.5 207.5 L401.8 210.5 L403.2 215 L398.8 212.4 L394.4 215 L395.8 210.5 L392.1 207.5 L396.8 207.3 Z" fill="#5630d0" stroke="#5630d0" stroke-width="0.8" stroke-linejoin="round"/>
<path d="M393.6 220 L396.2 225.6 L402.3 225.9 L397.6 229.8 L399.2 235.8 L393.6 232.5 L388 235.8 L389.6 229.8 L384.9 225.9 L391 225.6 Z" fill="#5630d0" stroke="#5630d0" stroke-width="0.8" stroke-linejoin="round"/>
<path d="M412 229.5 Q419 236 413 242 Q407.5 246 402.5 242 Q409.5 242 411.5 237.5 Q413 233.5 412 229.5 Z" fill="#f5c430"/>
<!-- pumpkin bucket -->
<path d="M500 215 Q506 197 516 191 Q524 187.5 531.4 187.5 Q539 187.5 547 191 Q557 197 563 215 L552 213 Q547 202 541 198.5 Q536 196.5 531.4 196.5 Q527 196.5 522 198.5 Q515 202 511 213 Z" fill="#f7931e" stroke="#c86f12" stroke-width="0.8"/>
<path d="M502 213.5 Q531.5 210 561 213.5 Q568 225 571.5 240 Q575 256 568 265 Q556 274 531.5 274 Q507 274 495 265 Q488 256 491.5 240 Q495 225 502 213.5 Z" fill="#f26222" stroke="#b94a14" stroke-width="0.8"/>
<path d="M509 217 Q531.5 214 554 217 Q556 240 554 258 Q550 271 531.5 271 Q513 271 509 258 Q507 240 509 217 Z" fill="#f7931e" stroke="#cf6a1a" stroke-width="0.6"/>
<circle cx="518.3" cy="234.8" r="5.3" fill="#1a1a1a"/><circle cx="542.7" cy="234.8" r="5.3" fill="#1a1a1a"/>
<path d="M529.6 237.5 L533 242 L526.2 242 Z" fill="#1a1a1a"/>
<path d="M519.5 246.5 Q530.5 249 541.5 246.5 Q538 254 530.5 254 Q523 254 519.5 246.5 Z" fill="#1a1a1a"/>
<!-- wand -->
<path d="M258.6 287.5 L269.5 300.5 L285.3 302.6 L275.7 317 L279.8 332.7 L262.7 329.3 L247.6 336.2 L246.9 321.1 L235.3 308.8 L251.7 304 Z" fill="#f8c630" stroke="#c29a22" stroke-width="2.2" stroke-linejoin="round"/>
<path d="M258.6 287.5 L269.5 300.5 L285.3 302.6 L275.7 317 L279.8 332.7 L262.7 329.3 L247.6 336.2 L246.9 321.1 L235.3 308.8 L251.7 304 Z" fill="#f8c630" stroke="#f8c630" stroke-width="0.6" stroke-linejoin="round"/>
<path d="M265 334 L271.5 385" stroke="#2f1a8a" stroke-width="8.6" stroke-linecap="round"/>
<path d="M265 334 L271.5 385" stroke="#4020b8" stroke-width="7" stroke-linecap="round"/>
<!-- broom -->
<path d="M432 301.5 Q475 313 549 344 L545 355 Q500 338 465 327 Q440 319 430 314.5 Q419 312 419.5 307 Q421 300 432 301.5 Z" fill="#6b4219" stroke="#3d2610" stroke-width="0.9"/>
<path d="M557.9 330.7 L561 336 L566 337 L570 345 L556 372 L548 368 L541.8 365 L546 361 L545 352 L549 346 L552 339 L555 337 Z" fill="#e8963a" stroke="#b86a1e" stroke-width="0.8"/>
<path d="M572.9 340.4 Q594.3 338 615.7 347.9 Q630 356 639.3 369.3 L624.3 365 L635 373.6 L626.5 373.6 L640.4 385.4 L626.5 384.3 L642.5 393.9 L623.2 392.9 L630.7 399.3 L613.6 397.2 L615.7 404.7 Q604 402 594.3 401.5 Q580 399 569 388 Q561 378 561 371.4 Z" fill="#e8922e" stroke="#b86a1e" stroke-width="0.9" stroke-linejoin="round"/>
<path d="M575 350 Q600 348 618 362 L605 360 Q620 372 628 380 Q610 376 600 372 Q612 384 618 392 Q600 388 590 382 Q596 392 600 396 Q585 393 575 384 Q568 375 567 366 Z" fill="#f2b866"/>
<path d="M578 356 Q600 362 622 376 M575 368 Q598 378 624 389 M580 380 Q598 390 610 397 M590 348 Q610 352 625 364" stroke="#c27426" stroke-width="1.1" fill="none"/>
<path d="M570.7 342.5 L558.9 370.4" stroke="#c59a18" stroke-width="10" stroke-linecap="round"/>
<path d="M570.7 342.5 L558.9 370.4" stroke="#f7c928" stroke-width="8" stroke-linecap="round"/>
<!-- ghost 1 -->
<path d="M385.6 341.2 Q362 341 351 350.7 Q333 364 328.6 381.8 Q326 398 330.4 411.1 Q334 426 342.4 437 Q333 446 330.4 454.2 Q329 464 333 466.3 Q338 469.5 344.2 468 Q356 462 366.6 454.2 Q390 453 409.7 450.8 Q436 445 458 437 Q480 433 499.5 435.3 Q497 428 492.6 423.2 Q478 402 463.2 385.2 Q470 379 473.6 371.4 Q476 365 471.9 362.8 Q467 358.5 461.5 358.5 Q450 359 439 359.3 Q430 352 416.6 347.3 Q402 341.5 385.6 341.2 Z" fill="#fafafa" stroke="#8f8f8f" stroke-width="1.1"/>
<circle cx="383.8" cy="381.8" r="8.8" fill="#0a0a0a"/><circle cx="381" cy="381.3" r="2.6" fill="#fff"/>
<circle cx="358.8" cy="403.3" r="9" fill="#0a0a0a"/><circle cx="355.8" cy="403.1" r="2.6" fill="#fff"/>
<path d="M385.6 394.5 Q387.5 403 383 408 Q378 411 371.5 407.5 Q379 401 385.6 394.5 Z" fill="#0a0a0a"/>
<!-- BOO sign -->
<path d="M567 439 Q567 438 569 438 L576 438.5 Q578 438.5 578 440 L578.5 452 L566 452 Z" fill="#4a2e14"/>
<path d="M561.4 488 L574.4 488 L572.3 538 Q572 540 570 540 L561 540 Q559.3 540 559.3 538 Z" fill="#4a2e14"/>
<g transform="rotate(4 571 472)">
<path d="M524 449 Q520 449 520 453 L521 458 L519 460 L520 486 Q520 493 527 493 L533 494 L535 492 L615 493 Q622 493 622 486 L622 470 L624 466 L622 456 Q622 450 616 450 L560 449 L552 447 L540 448 Z" fill="#583a1d" stroke="#3e2810" stroke-width="0.8"/>
<text x="571" y="485" text-anchor="middle" font-family="Liberation Sans" font-weight="bold" font-size="36" fill="#f7931e" stroke="#f7931e" stroke-width="1.6" stroke-linejoin="round" letter-spacing="-3">BOO!</text>
</g>
<!-- bow -->
<path d="M447.6 509 L455.8 509 Q468 500 479 499.8 Q484 500 484.5 505 Q485.5 517 483.5 530 Q483 535.5 477 535.2 Q466 534 455.8 525.7 L447.6 525.7 Q437 534 426 535.2 Q420.5 535.5 420 530 Q418.5 517 419.4 505 Q420 500 425 499.8 Q436 500 447.6 509 Z" fill="#fc5c23" stroke="#b84516" stroke-width="1.1" stroke-linejoin="round"/>
<ellipse cx="451.6" cy="517.4" rx="8.6" ry="8.2" fill="#f8901f" stroke="#c0621a" stroke-width="0.9"/>
<!-- cauldron -->
<path d="M241 607 L232.5 619.7" stroke="#0a0a0a" stroke-width="5.5" stroke-linecap="round"/>
<path d="M291.2 607 L300.7 619.7" stroke="#0a0a0a" stroke-width="5.5" stroke-linecap="round"/>
<path d="M234.2 546 Q221 560 221.2 578 Q222 600 240 610 Q252 616.3 266 616.3 Q281 616.3 294 610 Q312 600 311.9 578 Q312 560 299.8 546 Z" fill="#0a0a0a"/>
<path d="M226.4 536.8 Q240 529 265.3 528.5 Q292 529 306.7 537.7 Q307 542 299.8 547.5 L234.2 547.5 Q226 542 226.4 536.8 Z" fill="#0a0a0a"/>
<ellipse cx="265.7" cy="542" rx="26.3" ry="4.4" fill="#5bd339"/>
<path d="M239.4 561 Q230 578 241 598" stroke="#5bd339" stroke-width="2.6" fill="none" stroke-linecap="round"/>
<path d="M314 493.5 L273 539.5" stroke="#2f1a8a" stroke-width="9" stroke-linecap="round"/>
<path d="M314 493.5 L273 539.5" stroke="#4a21c0" stroke-width="7.4" stroke-linecap="round"/>
<!-- ghost 2 -->
<path d="M361.1 624.1 Q336 625 322.7 639.3 Q310 652 306.5 665.6 Q304 676 304.5 685.8 Q294 687 286.3 691.9 Q276 697 276.2 704 Q276 712 284 714.5 Q294 717 304.5 717.2 Q305 727 300.4 734.4 Q296 740 288.3 742.5 Q279 745 270.1 745.5 Q276 758 292.3 768.8 Q312 779 338.9 779.9 Q358 780 375.3 774.8 Q393 767 403.6 754.6 Q414 740 412.7 718.2 Q426 720.5 438 720.2 Q447 717 447.1 706 Q446 697 438 691.9 Q428 687 417.8 685.8 Q416 668 411.7 655.5 Q405 640 391.5 631.2 Q378 624 361.1 624.1 Z" fill="#fafafa" stroke="#8f8f8f" stroke-width="1.1"/>
<circle cx="337.9" cy="673.7" r="9.2" fill="#0a0a0a"/><circle cx="335.6" cy="671.4" r="2.7" fill="#fff"/>
<circle cx="382.4" cy="673.7" r="9.2" fill="#0a0a0a"/><circle cx="380.1" cy="671.4" r="2.7" fill="#fff"/>
<path d="M349.8 684.5 Q359.5 686 369.4 684.5 Q368 696 359.3 696.5 Q351 696 349.8 684.5 Z" fill="#0a0a0a"/>
<path d="M352.3 690 Q359.5 687.8 366.7 690 Q364.5 695.8 359.3 695.8 Q354.3 695.8 352.3 690 Z" fill="#f0586c"/>
<!-- ghost 3 -->
<path d="M539.3 584.7 Q503 586 495.3 612 Q491 622 490 632.7 Q478 631 466 631.3 Q455 633 455.3 641 Q457 650 468 654 Q478 659 487.3 663.3 Q488 690 483 710 Q478 722 474 728 Q473 734.5 478 734.4 Q490 732 495.6 733.2 Q500 735 503 740 Q510 746 518 745.2 C527 744 532 736.5 538.8 736.5 C546 736.5 551 745 559 745.2 Q566 746 572 742 Q577 736 582 734.4 Q595 733 604 734.4 Q608.5 733 607.2 726 Q600 712 597 695 Q595 680 595.3 664.7 Q610 660 618 655.3 Q626 650 626 642 Q624 634 614 633 Q602 633 591.3 628.7 Q589 610 578 598 Q562 584 539.3 584.7 Z" fill="#fafafa" stroke="#8f8f8f" stroke-width="1.1"/>
<circle cx="522" cy="628.7" r="9.5" fill="#0a0a0a"/><circle cx="519" cy="625.5" r="3.3" fill="#fff"/>
<circle cx="556" cy="628.7" r="9.5" fill="#0a0a0a"/><circle cx="553" cy="625.5" r="3.3" fill="#fff"/>
<ellipse cx="539" cy="646.5" rx="6" ry="7.3" fill="#0a0a0a"/>
<!-- selection -->
<rect x="808.5" y="349" width="226" height="226" fill="none" stroke="#9f9f9f" stroke-width="1"/>
<path d="M901.5 461.5 H941.5 M921.5 441.5 V481.5" stroke="#dddddd" stroke-width="1"/>
<rect x="804.5" y="345" width="8" height="8" fill="#fff" stroke="#9a9a9a" stroke-width="1"/>
<rect x="1030.5" y="345" width="8" height="8" fill="#fff" stroke="#9a9a9a" stroke-width="1"/>
<rect x="804.5" y="571" width="8" height="8" fill="#fff" stroke="#9a9a9a" stroke-width="1"/>
<rect x="1030.5" y="571" width="8" height="8" fill="#fff" stroke="#9a9a9a" stroke-width="1"/>
<rect x="888" y="319" width="66" height="17" rx="2" fill="#1f1f1f"/>
<text x="921" y="331" text-anchor="middle" font-family="Liberation Sans" font-size="9.5" fill="#fff" letter-spacing="0.3">4  in x 4  in</text>
<!-- cursor -->
<path d="M1062 448 L1062 469 L1066.8 464.5 L1070.5 472.5 L1074 471 L1070.3 463.2 L1077 463 Z" fill="#111" stroke="#fff" stroke-width="1"/>
</g>
</svg>
<div id="panel" class="a"></div>
<div class="a" style="left:1266px;top:84px;width:234px;height:36px;background:#fff"></div>
<div class="a" style="left:1279px;top:96px;font-size:11px;line-height:11px;color:#137a5a;font-weight:bold">Layers</div>
<div class="a" style="left:1338px;top:96px;font-size:11px;line-height:11px;color:#666;letter-spacing:0.4px">Color Sync</div>
<div class="a" style="left:1267px;top:117px;width:59px;height:2.5px;background:#137a5a;border-radius:1px"></div>
<div class="a" style="left:1266px;top:120px;width:234px;height:1px;background:#ececec"></div>
<div class="a" style="left:1266px;top:121px;width:234px;height:37px;background:#fff"></div>
<svg class="a" style="left:1281px;top:131px" width="15" height="15" viewBox="0 0 15 15"><path d="M1 4 V1 H4 M11 1 H14 V4 M14 11 V14 H11 M4 14 H1 V11" fill="none" stroke="#ddd" stroke-width="1.2"/><circle cx="6.5" cy="6.5" r="3" fill="none" stroke="#ddd" stroke-width="1.2"/><path d="M8.5 8.5 L11 11" stroke="#ddd" stroke-width="1.2"/></svg>
<svg class="a" style="left:1312px;top:130px" width="16" height="16" viewBox="0 0 16 16"><path d="M3.5 11.5 H1.5 V1.5 H11.5 V3.5" fill="none" stroke="#333" stroke-width="1.2"/><rect x="4.5" y="4.5" width="10" height="10" rx="1" fill="none" stroke="#333" stroke-width="1.2"/><path d="M9.5 6.8 V12.2 M6.8 9.5 H12.2" stroke="#333" stroke-width="1.2"/></svg>
<svg class="a" style="left:1344px;top:130px" width="15" height="16" viewBox="0 0 15 16"><path d="M1 3.5 H14 M5 3.5 V1.5 H10 V3.5 M2.5 3.5 L3.5 14.5 H11.5 L12.5 3.5 M6 6 V12 M9 6 V12" fill="none" stroke="#333" stroke-width="1.2" stroke-linejoin="round"/></svg>
<div class="a" style="left:1266px;top:158px;width:222px;height:607px;background:#fff;border-top:1px solid #f0f0f0"></div>
<div class="a" style="left:1270px;top:161px;width:215px;height:44px;background:#b7ecdb;border-radius:3px"></div>
<div class="a" style="left:1295px;top:173px;width:19px;height:19px;border:1.5px solid #b2abb6;background:#b9ecdc"></div>
<div class="a" style="left:1320px;top:170px;font-size:10.5px;line-height:10px;color:#333;font-weight:bold">Square</div>
<div class="a" style="left:1320px;top:185px;font-size:10.5px;line-height:10px;color:#74908a;letter-spacing:0.3px">Guide</div>
<svg class="a" style="left:1279px;top:222px" width="7" height="10"><path d="M1.5 1 L5.5 5 L1.5 9" fill="none" stroke="#444" stroke-width="1.3"/></svg>
<svg class="a" style="left:1297px;top:220px" width="16" height="16" viewBox="0 0 16 16"><path d="M1 4.5 V1 H4.5 M11.5 1 H15 V4.5 M15 11.5 V15 H11.5 M4.5 15 H1 V11.5" fill="none" stroke="#444" stroke-width="1.3"/><rect x="4" y="4" width="5.5" height="5.5" rx="1.5" fill="none" stroke="#444" stroke-width="1.1"/><rect x="6.5" y="6.5" width="5.5" height="5.5" rx="0.5" fill="#fff" stroke="#444" stroke-width="1.1"/></svg>
<div class="a" style="left:1320px;top:222px;font-size:10.5px;line-height:10px;color:#555;letter-spacing:0.5px">Group</div>
<div class="a" style="left:1488px;top:158px;width:12px;height:607px;background:#f4f4f4"></div>
<svg class="a" style="left:1491px;top:162px" width="6" height="4"><path d="M0 4 L3 0.5 L6 4 Z" fill="#888"/></svg>
<svg class="a" style="left:1491px;top:758px" width="6" height="4"><path d="M0 0 L3 3.5 L6 0 Z" fill="#555"/></svg>
<div class="a" style="left:1274px;top:771px;width:42px;height:29px;border:1.5px solid #9a9a9a;border-radius:2px;background:#fff"></div>
<div class="a" style="left:1324px;top:782px;font-size:8px;line-height:8px;color:#555">Blank Canvas</div>
<div class="a" style="left:1266px;top:805px;width:234px;height:35px;background:#fff"></div>
<svg class="a" style="left:1286px;top:809px" width="16" height="15" viewBox="0 0 16 15"><circle cx="6" cy="6" r="4.8" fill="none" stroke="#d2d2d2" stroke-width="1.1" stroke-dasharray="2 1"/><path d="M8 5 H14.5 V13.5 H5.5 V7" fill="none" stroke="#d2d2d2" stroke-width="1.1"/></svg>
<div class="a bl" style="left:1285px;top:829px">Slice</div>
<svg class="a" style="left:1328px;top:808px" width="26" height="16" viewBox="0 0 26 16"><rect x="1" y="1" width="8" height="8" rx="1" fill="none" stroke="#d2d2d2" stroke-width="1.1"/><circle cx="10" cy="10" r="4.8" fill="none" stroke="#d2d2d2" stroke-width="1.1"/><path d="M20 7 H24 L22 9.5 Z" fill="#d2d2d2"/></svg>
<div class="a bl" style="left:1323px;top:829px">Combine</div>
<svg class="a" style="left:1376px;top:811px" width="17" height="11" viewBox="0 0 17 11"><rect x="1" y="2.5" width="15" height="7" rx="3.5" fill="none" stroke="#d2d2d2" stroke-width="1.1"/><path d="M5 1.5 H12 M5 5.5 H12" stroke="#d2d2d2" stroke-width="1.1"/></svg>
<div class="a bl" style="left:1373px;top:829px">Attach</div>
<svg class="a" style="left:1421px;top:808px" width="16" height="16" viewBox="0 0 16 16"><path d="M1.5 7 L8 11 L14.5 7 M1.5 11 L8 15 L14.5 11 M8 1 V7 M5.5 4.5 L8 7 L10.5 4.5" fill="none" stroke="#d2d2d2" stroke-width="1.1"/></svg>
<div class="a bl" style="left:1417px;top:829px">Flatten</div>
<svg class="a" style="left:1467px;top:808px" width="16" height="16" viewBox="0 0 16 16"><circle cx="8" cy="8" r="6.8" fill="none" stroke="#d2d2d2" stroke-width="1.2" stroke-dasharray="2.4 2"/></svg>
<div class="a bl" style="left:1459px;top:829px">Contour</div>
<svg class="a" style="left:0;top:0" width="1500" height="840" viewBox="0 0 1500 840">
<path d="M175.7 92.9 L196 57 L203.3 66.2 L245.7 38 L252.9 48.6 L211.4 78 L217 87.6 Z" fill="#176e84"/>
<path d="M669.6 116.3 L708.8 130.2 L700.6 140 L765.3 208.4 L755.2 216.9 L690.2 148.8 L680.9 155.7 Z" fill="#176e84"/>
<path d="M37.9 291.8 L79.1 298.3 L72.5 309.5 L153.1 367.1 L145.2 376.9 L64.7 319.9 L56.8 327.8 Z" fill="#176e84"/>
<rect x="86" y="792" width="80" height="32" rx="3" fill="#f5f5f5"/>
<text x="100" y="814" font-family="Liberation Sans" font-size="14" fill="#dddddd">100%</text>
<text x="14" y="822" font-family="Liberation Serif" font-weight="bold" font-size="45" fill="#176b80" textLength="306" lengthAdjust="spacingAndGlyphs">Craft with Sarah</text>
<path d="M90.5 818 Q91 828 86 830 Q81 831 78.5 828" stroke="#176b80" stroke-width="3" fill="none" stroke-linecap="round"/>
<path d="M197.5 818 Q198 829 204 830.5 Q209 830.5 210 826.5" stroke="#176b80" stroke-width="2.6" fill="none" stroke-linecap="round"/>
<path d="M253.5 816 Q253.5 827 258.5 830 Q262 830.5 263 825" stroke="#176b80" stroke-width="2.6" fill="none" stroke-linecap="round"/>
</svg>
</body></html>
